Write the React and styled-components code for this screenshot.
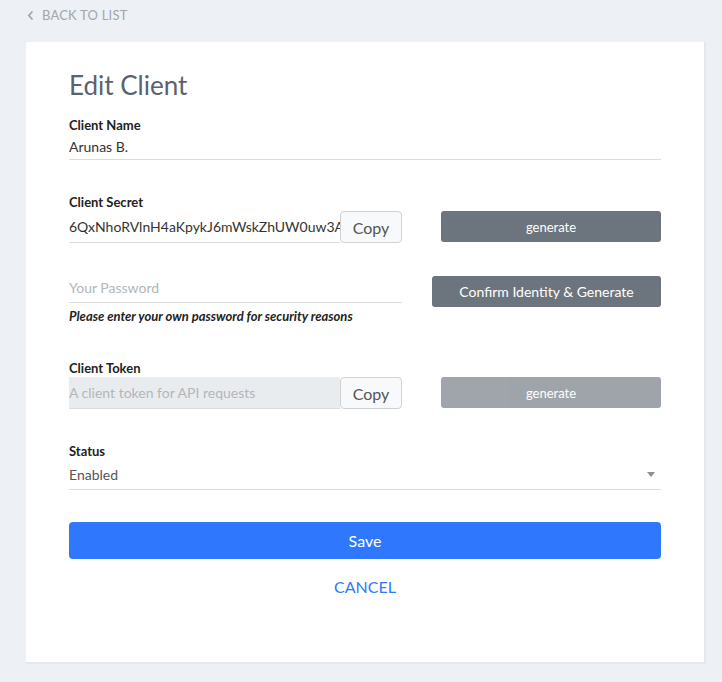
import styled, { createGlobalStyle } from 'styled-components';

const GlobalStyle = createGlobalStyle`
  body {
    margin: 0;
    background: #edf0f5;
    font-family: Lato, "Open Sans", sans-serif;
    color: #212529;
  }
  * { box-sizing: border-box; }
`;

const Page = styled.div`
  padding: 0 0 20px 26px;
  min-height: 682px;
`;

const BackLink = styled.a`
  display: flex;
  align-items: center;
  gap: 8px;
  height: 30px;
  padding-left: 1px;
  color: #a3a7ad;
  font-size: 13px;
  letter-spacing: 0.2px;
  text-transform: uppercase;
  text-decoration: none;
  cursor: pointer;
`;

const Card = styled.div`
  width: 680px;
  margin-top: 12px;
  background: #fff;
  border-right: 2px solid #e5e7ea;
  border-bottom: 2px solid #e5e7ea;
  padding: 28px 43px 65px;
`;

const Title = styled.h1`
  margin: 0;
  font-size: 26px;
  line-height: 31px;
  font-weight: 400;
  color: #5a636d;
`;

const Field = styled.div`
  margin-top: ${(p) => p.$gap || 33}px;
`;

const Label = styled.label`
  display: block;
  font-size: 13px;
  font-weight: 700;
  line-height: 18px;
  color: #222;
`;

const Input = styled.input`
  display: block;
  width: 100%;
  height: 26px;
  padding: 0;
  border: none;
  border-bottom: 1px solid #dcdcdc;
  background: transparent;
  font-family: inherit;
  font-size: 14px;
  color: #333;
  outline: none;

  &::placeholder {
    color: #b3b6ba;
  }

  &:disabled {
    background: #e9ecef;
  }
`;

const Row = styled.div`
  display: grid;
  grid-template-columns: 333px 1fr;
  column-gap: 30px;
  align-items: start;
`;

const InputGroup = styled.div`
  display: flex;
  align-items: stretch;
  height: 32px;

  ${Input} {
    flex: 1;
    min-width: 0;
    height: 32px;
  }
`;

const CopyButton = styled.button`
  width: 62px;
  flex: none;
  border: 1px solid #cfd2d5;
  border-radius: 4px;
  background: #f8f9fa;
  color: #555;
  font-family: inherit;
  font-size: 16px;
  padding: 0;
`;

const GreyButton = styled.button`
  width: ${(p) => (p.$wide ? '100%' : 'calc(100% - 9px)')};
  margin-left: ${(p) => (p.$wide ? 0 : 9)}px;
  height: 31px;
  border: none;
  border-radius: 3px;
  background: #6c757d;
  opacity: ${(p) => (p.disabled ? 0.65 : 1)};
  color: #fff;
  font-family: inherit;
  font-size: ${(p) => (p.$wide ? 14 : 13)}px;
`;

const PasswordInput = styled(Input)`
  height: 27px;
  padding-bottom: 4px;
`;

const Help = styled.p`
  margin: 4px 0 0;
  font-size: 13px;
  line-height: 18px;
  font-style: italic;
  font-weight: 700;
  color: #222;
`;

const SelectWrap = styled.div`
  position: relative;
  height: 30px;
  border-bottom: 1px solid #dcdcdc;
  display: flex;
  align-items: center;
  font-size: 14px;
  color: #555;
`;

const Caret = styled.span`
  position: absolute;
  right: 6px;
  top: 12px;
  width: 0;
  height: 0;
  border-left: 4px solid transparent;
  border-right: 4px solid transparent;
  border-top: 5px solid #8a8f94;
`;

const SaveButton = styled.button`
  display: block;
  width: 100%;
  height: 37px;
  margin-top: 32px;
  border: none;
  border-radius: 4px;
  background: #2f78fd;
  color: #fff;
  font-family: inherit;
  font-size: 16px;
`;

const CancelLink = styled.a`
  display: block;
  margin-top: 18px;
  text-align: center;
  font-size: 16px;
  line-height: 20px;
  color: #2f78fd;
  text-transform: uppercase;
  cursor: pointer;
`;

function Chevron() {
  return (
    <svg width="7" height="11" viewBox="0 0 7 11">
      <path d="M5.5 1.5 L1.8 5.5 L5.5 9.5" fill="none" stroke="#a3a7ad" strokeWidth="1.8" />
    </svg>
  );
}

export default function App() {
  return (
    <Page>
      <GlobalStyle />
      <BackLink>
        <Chevron />
        Back to list
      </BackLink>
      <Card>
        <Title>Edit Client</Title>

        <Field $gap={15}>
          <Label>Client Name</Label>
          <Input defaultValue="Arunas B." />
        </Field>

        <Field>
          <Label>Client Secret</Label>
          <Row>
            <InputGroup>
              <Input readOnly value="6QxNhoRVlnH4aKpykJ6mWskZhUW0uw3AltvQ9pX2" />
              <CopyButton>Copy</CopyButton>
            </InputGroup>
            <GreyButton>generate</GreyButton>
          </Row>
        </Field>

        <Field $gap={33}>
          <Row>
            <div>
              <PasswordInput type="password" placeholder="Your Password" />
              <Help>Please enter your own password for security reasons</Help>
            </div>
            <GreyButton $wide>Confirm Identity &amp; Generate</GreyButton>
          </Row>
        </Field>

        <Field $gap={34}>
          <Label>Client Token</Label>
          <Row>
            <InputGroup>
              <Input disabled placeholder="A client token for API requests" />
              <CopyButton>Copy</CopyButton>
            </InputGroup>
            <GreyButton disabled>generate</GreyButton>
          </Row>
        </Field>

        <Field>
          <Label>Status</Label>
          <SelectWrap>
            Enabled
            <Caret />
          </SelectWrap>
        </Field>

        <SaveButton>Save</SaveButton>
        <CancelLink>Cancel</CancelLink>
      </Card>
    </Page>
  );
}
